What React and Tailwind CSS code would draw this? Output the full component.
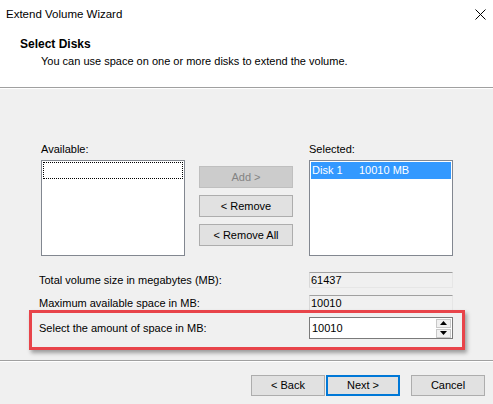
import React from "react";

function Btn({ children, disabled, primary, className = "" }) {
  const base =
    "flex items-center justify-center text-[11px] leading-none select-none ";
  const style = disabled
    ? "bg-[#cccccc] border border-[#bfbfbf] text-[#838383]"
    : primary
    ? "bg-[#e1e1e1] border-2 border-[#0078d7] text-black"
    : "bg-[#e1e1e1] border border-[#adadad] text-black";
  return <div className={base + style + " " + className}>{children}</div>;
}

function ReadOnlyField({ value }) {
  return (
    <div className="w-[144px] h-[16px] bg-[#f0f0f0] border-t border-l border-t-[#a0a0a0] border-l-[#d8d8d8] border-r border-b border-r-[#e6e6e6] border-b-[#e6e6e6] flex items-center pl-[1px] text-[11px] leading-none">
      {value}
    </div>
  );
}

export default function App() {
  return (
    <div className="w-[493px] h-[404px] bg-[#f0f0f0] font-['Liberation_Sans',Arial,sans-serif] text-black overflow-hidden flex flex-col">
      {/* Header */}
      <div className="bg-white h-[87px] relative shrink-0">
        <div className="pt-[7px] pl-[6px] text-[11.5px] leading-[14px]">Extend Volume Wizard</div>
        <svg className="absolute left-[475px] top-[9px]" width="11" height="11" viewBox="0 0 11 11">
          <path d="M0.5 0.5 L10.5 10.5 M10.5 0.5 L0.5 10.5" stroke="#000" strokeWidth="1" />
        </svg>
        <div className="pt-[16px] pl-[20px] text-[12px] leading-[14px] font-bold">Select Disks</div>
        <div className="pt-[3px] pl-[41px] text-[11px] leading-[14px]">
          You can use space on one or more disks to extend the volume.
        </div>
      </div>
      <div className="h-px bg-[#a0a0a0] shrink-0" />
      <div className="h-px bg-white shrink-0" />

      {/* Body */}
      <div className="relative h-[271px] shrink-0 pt-[53px]">
        <div className="flex pl-[41px]">
          {/* Available */}
          <div className="w-[144px]">
            <div className="text-[11px] leading-[14px] mb-[4px]">Available:</div>
            <div className="h-[96px] bg-white border border-[#828790] p-px">
              <div className="h-[17px] border border-dotted border-black" />
            </div>
          </div>
          {/* Buttons */}
          <div className="ml-[14px] w-[94px] pt-[24px] flex flex-col gap-[7px]">
            <Btn disabled className="h-[22px]">Add &gt;</Btn>
            <Btn className="h-[22px]">&lt; Remove</Btn>
            <Btn className="h-[22px]">&lt; Remove All</Btn>
          </div>
          {/* Selected */}
          <div className="ml-[16px] w-[144px]">
            <div className="text-[11px] leading-[14px] mb-[4px]">Selected:</div>
            <div className="h-[96px] bg-white border border-[#828790] p-px">
              <div className="h-[17px] bg-[#3399ff] text-white text-[11px] leading-none flex items-center pl-[1px]">
                <span className="w-[47px]">Disk 1</span>
                <span>10010 MB</span>
              </div>
            </div>
          </div>
        </div>

        {/* Size rows */}
        <div className="mt-[16px] pl-[39px] pr-[40px] flex flex-col">
          <div className="flex items-center justify-between h-[16px]">
            <span className="text-[11px] leading-none">Total volume size in megabytes (MB):</span>
            <ReadOnlyField value="61437" />
          </div>
          <div className="flex items-center justify-between h-[16px] mt-[7px]">
            <span className="text-[11px] leading-none">Maximum available space in MB:</span>
            <ReadOnlyField value="10010" />
          </div>
          <div className="flex items-center justify-between h-[22px] mt-[6px]">
            <span className="text-[11px] leading-none">Select the amount of space in MB:</span>
            <div className="w-[144px] h-[22px] bg-white border border-[#7a7a7a] flex items-center">
              <span className="flex-1 pl-[2px] text-[11px] leading-none">10010</span>
              <div className="flex flex-col gap-px pr-px">
                <div className="w-[15px] h-[9px] bg-[#f0f0f0] border border-[#c8c8c8] flex items-center justify-center">
                  <svg width="7" height="4" viewBox="0 0 7 4"><path d="M3.5 0 L7 4 L0 4 Z" fill="#000" /></svg>
                </div>
                <div className="w-[15px] h-[9px] bg-[#f0f0f0] border border-[#c8c8c8] flex items-center justify-center">
                  <svg width="7" height="4" viewBox="0 0 7 4"><path d="M0 0 L7 0 L3.5 4 Z" fill="#000" /></svg>
                </div>
              </div>
            </div>
          </div>
        </div>

        {/* Red annotation overlay */}
        <div className="pointer-events-none absolute left-[29px] top-[221px] w-[436px] h-[40px] border-[3px] border-[#e8444a] shadow-[2px_3px_4px_rgba(0,0,0,0.35)]" />
      </div>

      <div className="h-px bg-[#a0a0a0] shrink-0" />
      <div className="h-px bg-white shrink-0" />

      {/* Footer */}
      <div className="flex pt-[13px] pl-[251px]">
        <Btn className="w-[74px] h-[21px]">&lt; Back</Btn>
        <Btn primary className="w-[74px] h-[21px] ml-px">Next &gt;</Btn>
        <Btn className="w-[74px] h-[21px] ml-[11px]">Cancel</Btn>
      </div>
    </div>
  );
}
